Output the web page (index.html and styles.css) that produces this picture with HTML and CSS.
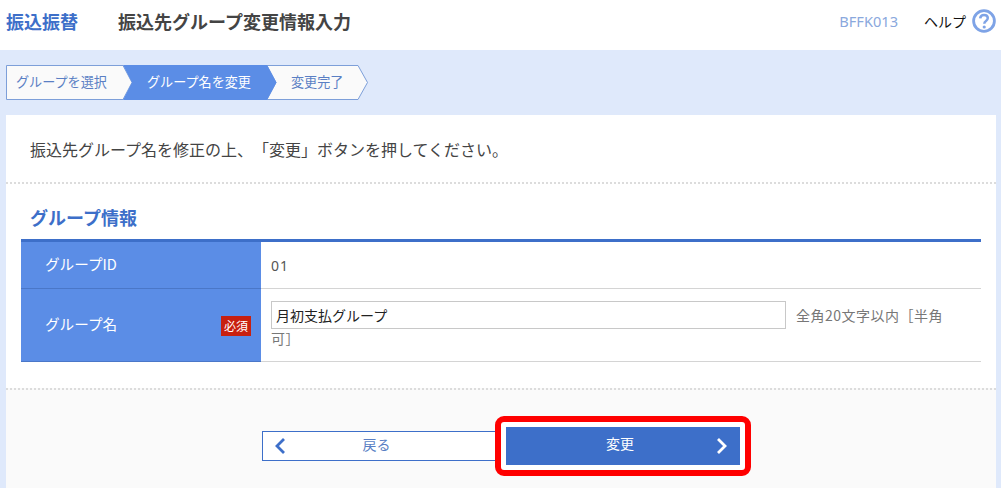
FILE: index.html
```html
<!DOCTYPE html>
<html lang="ja">
<head>
<meta charset="utf-8">
<title>振込先グループ変更情報入力</title>
<link rel="stylesheet" href="styles.css">
</head>
<body>
<header class="top">
  <div class="crumb">振込振替</div>
  <h1 class="title">振込先グループ変更情報入力</h1>
  <div class="code">BFFK013</div>
  <a class="help">ヘルプ
    <svg class="help-icon" viewBox="0 0 24 24" width="24" height="24" aria-hidden="true">
      <circle cx="12" cy="12" r="10.4" fill="#fff" stroke="#7ea3e6" stroke-width="2.8"/>
      <path d="M8.2 9.4C8.4 7.2 10 6 12 6c2.2 0 3.8 1.3 3.8 3.1 0 1.4-.8 2.1-1.8 2.8-1.1.8-1.7 1.3-1.7 2.8" fill="none" stroke="#7ea3e6" stroke-width="2.5"/>
      <circle cx="12.2" cy="18" r="1.6" fill="#7ea3e6"/>
    </svg>
  </a>
</header>

<main class="page">
  <ol class="steps">
    <li class="step step-one">グループを選択</li>
    <li class="step step-two">グループ名を変更</li>
    <li class="step step-three">変更完了</li>
    <svg class="steps-bg" viewBox="0 0 362 35" width="362" height="35" aria-hidden="true">
      <path d="M.5.5H117L126 17.5L117 34.5H.5Z" fill="#fafafa" stroke="#7d9fd9"/>
      <path d="M261 .5H352L361.5 17.5L352 34.5H261L270 17.5Z" fill="#fafafa" stroke="#7d9fd9"/>
      <path d="M117 0H261L270.5 17.5L261 35H117L126 17.5Z" fill="#5b8de6"/>
    </svg>
  </ol>

  <section class="card">
    <p class="lead">振込先グループ名を修正の上、「変更」ボタンを押してください。</p>
    <div class="info">
      <h2 class="section-title">グループ情報</h2>
      <div class="table">
        <div class="row row-id">
          <div class="th">グループID</div>
          <div class="td td-id">01</div>
        </div>
        <div class="row row-name">
          <div class="th">グループ名<span class="req">必須</span></div>
          <div class="td td-name">
            <span class="input">月初支払グループ</span><span class="hint">全角20文字以内［半角</span><br><span class="hint">可］</span>
          </div>
        </div>
      </div>
    </div>
    <div class="actions">
      <a class="btn-back">
        <svg class="chev" viewBox="0 0 12 18" width="12" height="18" aria-hidden="true"><path d="M10 2L3 9l7 7" fill="none" stroke="#3d6fc9" stroke-width="2.8"/></svg>
        <span>戻る</span>
      </a>
      <div class="highlight">
        <a class="btn-main">
          <span>変更</span>
          <svg class="chev chev-right" viewBox="0 0 12 18" width="12" height="18" aria-hidden="true"><path d="M2 2l7 7-7 7" fill="none" stroke="#fff" stroke-width="2.8"/></svg>
        </a>
      </div>
    </div>
  </section>
</main>
</body>
</html>
```

FILE: styles.css
```css
* { box-sizing: border-box; }
html, body { margin: 0; padding: 0; height: 488px; overflow: hidden; }
body {
  font-family: "Noto Sans CJK JP", "Noto Sans", sans-serif;
  color: #444;
  background: #dfe9fb;
  text-spacing-trim: space-all;
  font-feature-settings: "chws" 0;
}
.top {
  display: flex;
  align-items: center;
  height: 50px;
  background: #fff;
  padding: 0 5px 9px 6px;
}
.crumb { font-size: 18px; font-weight: 700; color: #3d6fc9; width: 112px; }
.title { margin: 0; font-size: 18px; font-weight: 700; color: #444; flex: 1; }
.code { font-family: "Noto Sans", "Liberation Sans", sans-serif; font-size: 14.6px; color: #8aa8dd; margin-right: 26px; }
.help { display: flex; align-items: center; font-size: 14px; color: #111; gap: 6px; }
.help-icon { display: block; }

.page { padding: 15px 5px 0 6px; }
.steps {
  position: relative;
  display: flex;
  list-style: none;
  margin: 0 0 15px;
  padding: 0;
  height: 35px;
  width: 362px;
}
.steps-bg { position: absolute; left: 0; top: 0; z-index: 0; }
.step { position: relative; z-index: 1; font-size: 13.1px; line-height: 34px; color: #5a7fc4; white-space: nowrap; }
.step-one { width: 141px; padding-left: 10px; }
.step-two { width: 144px; color: #fff; }

.card { background: #fff; height: 373px; overflow: hidden; }
.lead {
  margin: 0;
  height: 69px;
  padding: 22px 0 0 24px;
  font-size: 16px;
  line-height: 24px;
  color: #444;
  border-bottom: 2px dotted #dcdcdc;
}
.info { padding: 0 15px; height: 204px; }
.section-title {
  margin: 0;
  height: 55px;
  padding: 20px 0 0 9px;
  font-size: 18px;
  line-height: 26px;
  font-weight: 700;
  color: #3d6fc9;
}
.table { border-top: 3px solid #3d6fc9; }
.row { display: flex; border-bottom: 1px solid #d4d4d4; }
.row-id { height: 47px; }
.row-name { height: 73px; }
.th {
  display: flex;
  align-items: center;
  justify-content: space-between;
  width: 240px;
  flex: none;
  padding: 0 10px 4px 24px;
  margin-bottom: -1px;
  background: #5b8de6;
  border-bottom: 1px solid #4a77c8;
  color: #fff;
  font-size: 14.6px;
}
.req {
  width: 30px;
  margin-top: 6px;
  background: #c8200f;
  color: #fff;
  font-size: 12px;
  line-height: 20px;
  text-align: center;
}
.td { flex: 1; padding: 12px 30px 0 10px; font-size: 14px; }
.td-id { font-family: "Noto Sans", sans-serif; font-size: 14px; letter-spacing: 1px; line-height: 24px; color: #555; }
.td-name { line-height: 18px; }
.input {
  display: inline-block;
  width: 515px;
  height: 28px;
  border: 1px solid #c8c8c8;
  padding: 3px 0 0 4px;
  line-height: 20px;
  font-size: 14px;
  color: #222;
  margin-right: 10px;
}
.hint { color: #777; font-size: 14px; line-height: 18px; letter-spacing: .5px; }

.actions {
  display: flex;
  align-items: center;
  height: 114px;
  padding-left: 256px;
  background: #fafafa;
  border-top: 2px dotted #dcdcdc;
}
.btn-back {
  position: relative;
  display: flex;
  align-items: center;
  justify-content: center;
  width: 233px;
  height: 30px;
  padding: 0 5px 4px 0;
  background: #fff;
  border: 1px solid #3d6fc9;
  border-right: 0;
  font-size: 14px;
  color: #5a7fc4;
}
.chev { display: block; }
.btn-back .chev { position: absolute; left: 11px; top: 5px; }
.highlight {
  background: #fff;
  border: 6px solid #f00;
  border-radius: 9px;
  padding: 5px;
}
.btn-main {
  position: relative;
  display: flex;
  align-items: center;
  justify-content: center;
  width: 234px;
  height: 38px;
  padding: 0 6px 6px 0;
  background: #3d6fc9;
  color: #fff;
  font-size: 14px;
}
.chev-right { position: absolute; right: 12px; top: 10px; }
```
